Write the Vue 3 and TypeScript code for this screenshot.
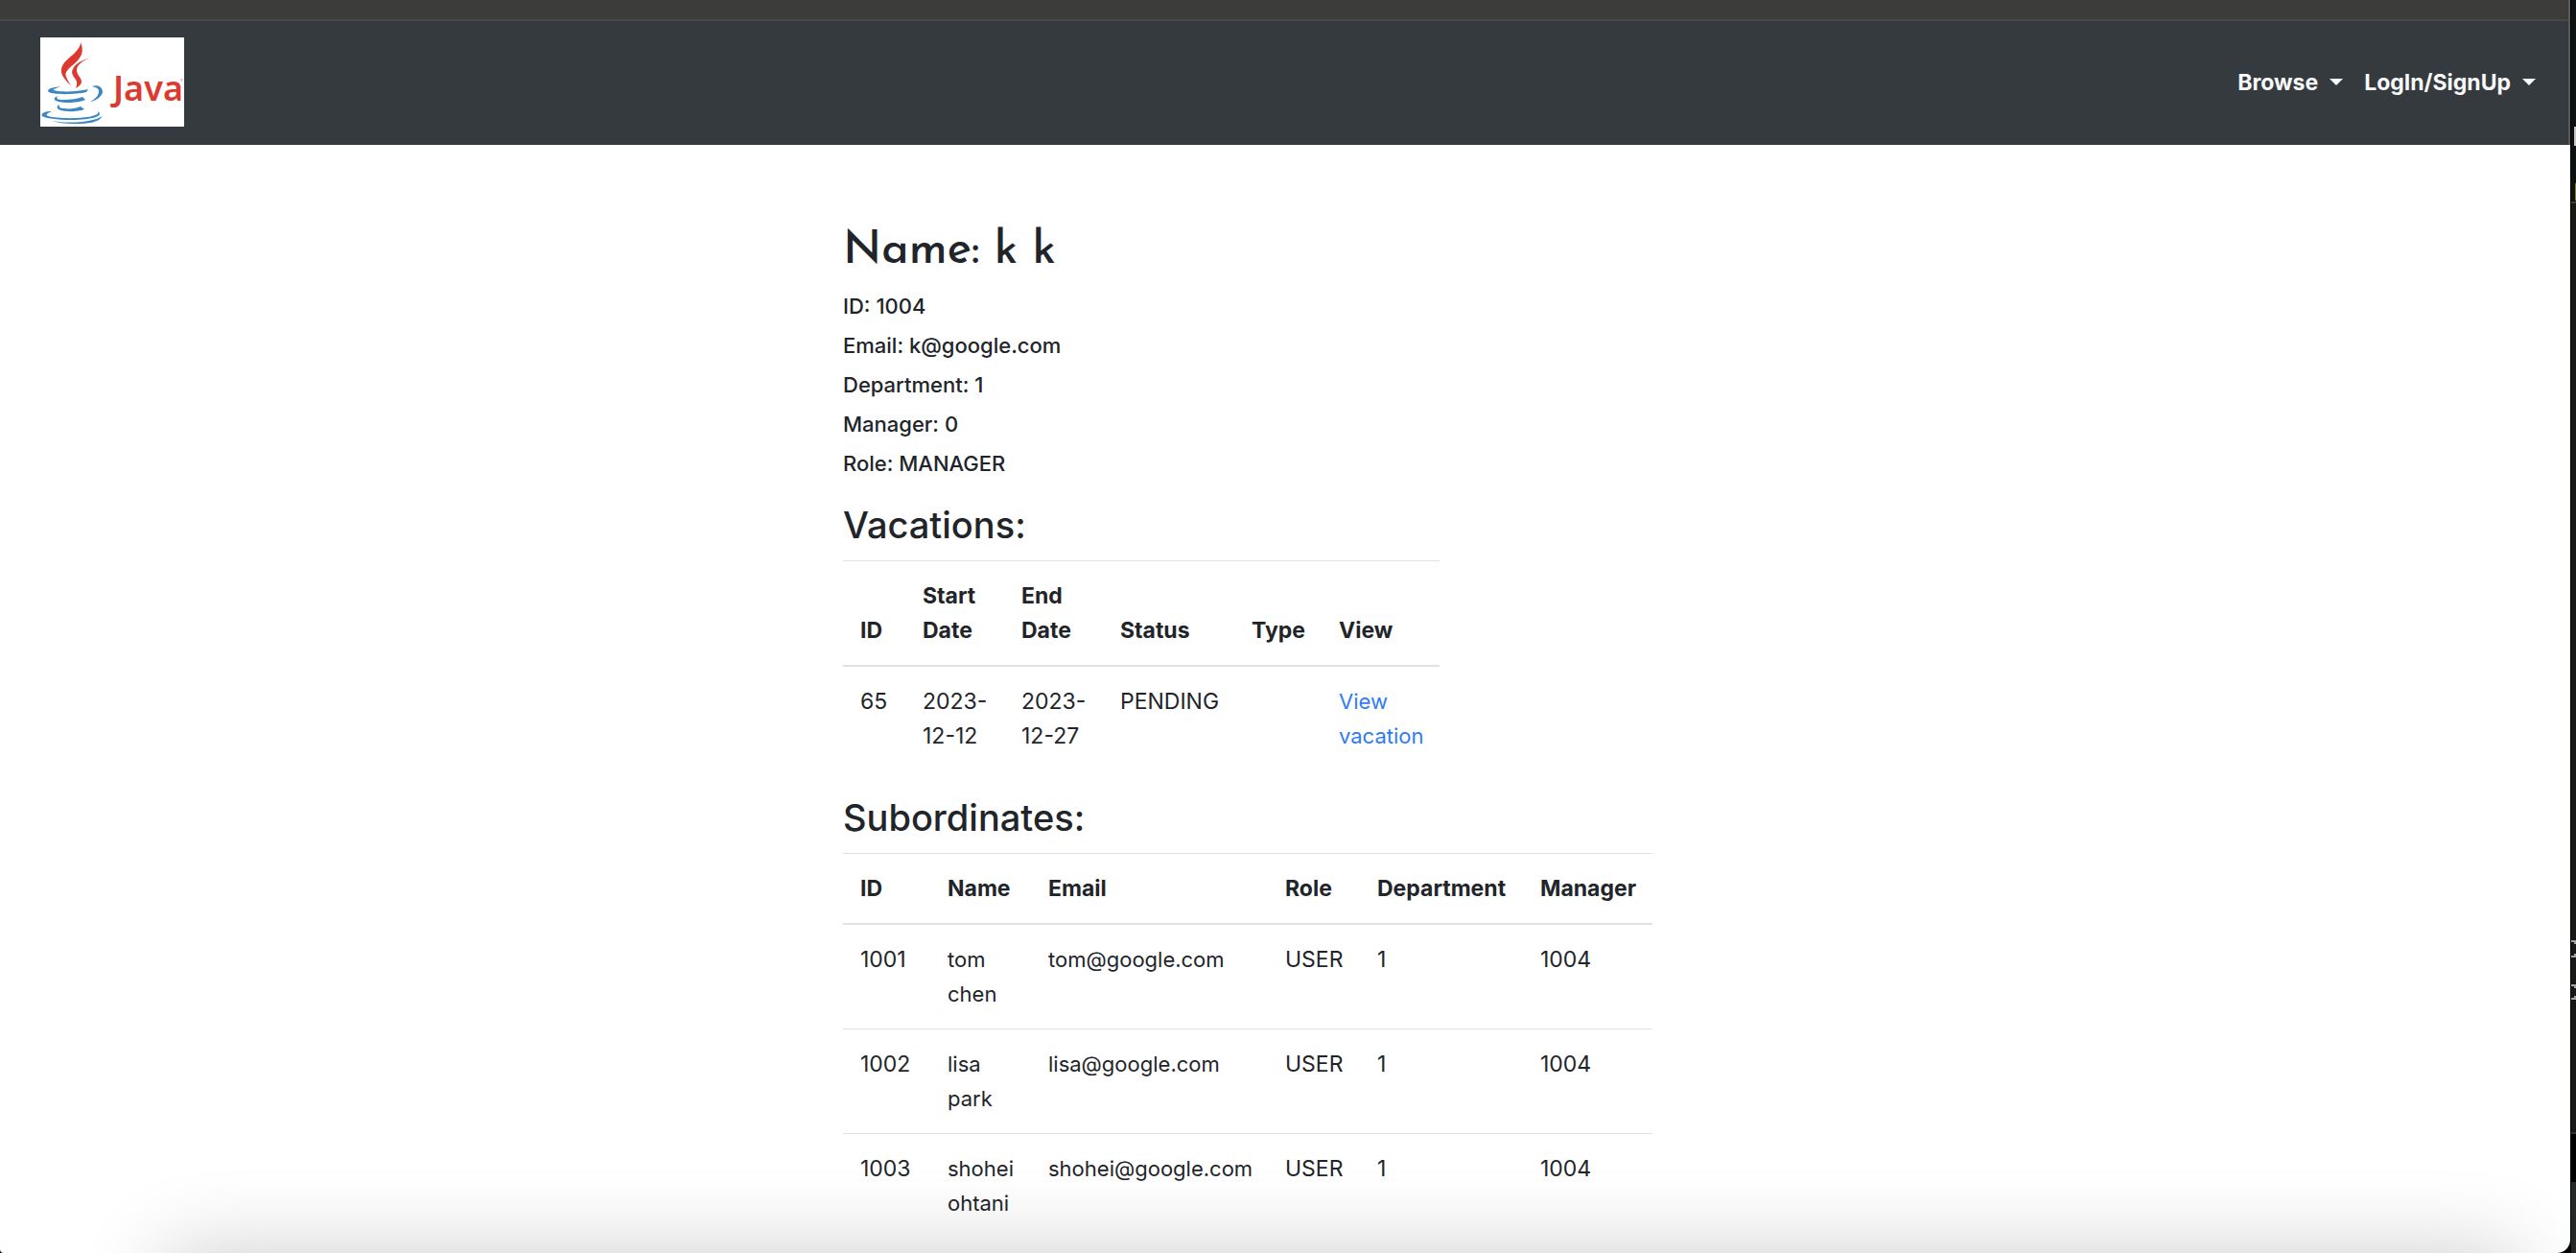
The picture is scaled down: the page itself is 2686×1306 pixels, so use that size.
<script setup lang="ts">
interface Vacation {
  id: number
  start: string
  end: string
  status: string
  type: string
}

interface Employee {
  id: number
  name: string
  email: string
  role: string
  department: number
  manager: number
}

const menus: string[] = ['Browse', 'LogIn/SignUp']

const details: { label: string; value: string }[] = [
  { label: 'ID', value: '1004' },
  { label: 'Email', value: 'k@google.com' },
  { label: 'Department', value: '1' },
  { label: 'Manager', value: '0' },
  { label: 'Role', value: 'MANAGER' },
]

const vacations: Vacation[] = [
  { id: 65, start: '2023-12-12', end: '2023-12-27', status: 'PENDING', type: '' },
]

const subordinates: Employee[] = [
  { id: 1001, name: 'tom chen', email: 'tom@google.com', role: 'USER', department: 1, manager: 1004 },
  { id: 1002, name: 'lisa park', email: 'lisa@google.com', role: 'USER', department: 1, manager: 1004 },
  { id: 1003, name: 'shohei ohtani', email: 'shohei@google.com', role: 'USER', department: 1, manager: 1004 },
]
</script>

<template>
  <div class="desktop">
    <div class="window">
      <div class="toolbar"></div>
      <header class="navbar">
        <a class="brand" href="#" aria-label="Java home">
          <svg viewBox="0 0 150 93" width="150" height="93">
            <rect width="150" height="93" fill="#fff" />
            <g fill="#dc3a30">
              <path d="M42 5C46 14 43 21 36 27C29 33 25 36 27 41C28 44 30 47 32 50C25 44 21 38 22 33C23 26 31 21 36 16C41 11 42 8 42 5Z" />
              <path d="M52 21C43 25 38 29 38 34C38 39 43 42 43 46C43 49 40 51 37 53C38 50 39 47 37 44C35 41 33 39 33 36C34 28 43 24 52 21Z" />
            </g>
            <g fill="#3b86c3">
              <path d="M22 51C16 53 13 54 14 55C18 57 38 57 50 54L48 57C36 60 10 60 8 56C8 53 14 52 22 51Z" />
              <path d="M54 51C60 49 65 52 65 57C64 62 58 66 52 67C58 64 61 60 61 56C61 53 58 52 54 51Z" />
              <path d="M18 61C16 64 18 65 24 65C32 65 39 64 44 62L47 65C39 69 18 69 15 65C14 63 16 62 18 61Z" />
              <path d="M20 70C19 73 21 74 25 74C31 75 37 74 42 72L46 75C38 78 21 78 18 74C17 72 18 71 20 70Z" />
              <path d="M12 77C7 79 5 81 8 82C18 85 48 85 57 81C60 80 61 79 60 77C64 80 61 82 58 83C45 88 6 86 2 82C0 79 5 77 12 77Z" />
              <path d="M13 87C27 90 54 89 65 82C61 89 49 90 36 90C26 90 17 89 13 87Z" />
            </g>
            <text x="76" y="66" class="wordmark">Java</text>
            <path d="M146 44h3M147 44v2" stroke="#dc3a30" stroke-width="1" opacity="0.4" />
          </svg>
        </a>
        <nav class="menus">
          <button v-for="menu in menus" :key="menu" type="button" class="menu">
            {{ menu }}
            <span class="caret"></span>
          </button>
        </nav>
      </header>

      <main class="profile">
        <h1 class="name">Name: k k</h1>
        <p v-for="detail in details" :key="detail.label" class="detail">
          {{ detail.label }}: {{ detail.value }}
        </p>

        <h2 class="section">Vacations:</h2>
        <table class="table vacations">
          <colgroup>
            <col class="w-id" /><col class="w-date" /><col class="w-date" />
            <col class="w-status" /><col class="w-type" /><col class="w-view" />
          </colgroup>
          <thead>
            <tr>
              <th>ID</th>
              <th>Start Date</th>
              <th>End Date</th>
              <th>Status</th>
              <th>Type</th>
              <th>View</th>
            </tr>
          </thead>
          <tbody>
            <tr v-for="vacation in vacations" :key="vacation.id">
              <td>{{ vacation.id }}</td>
              <td>{{ vacation.start }}</td>
              <td>{{ vacation.end }}</td>
              <td>{{ vacation.status }}</td>
              <td>{{ vacation.type }}</td>
              <td class="prose"><a class="link" href="#">View vacation</a></td>
            </tr>
          </tbody>
        </table>

        <h2 class="section">Subordinates:</h2>
        <table class="table subordinates">
          <colgroup>
            <col class="w-number" /><col class="w-name" /><col class="w-email" />
            <col class="w-role" /><col class="w-department" /><col class="w-manager" />
          </colgroup>
          <thead>
            <tr>
              <th>ID</th>
              <th>Name</th>
              <th>Email</th>
              <th>Role</th>
              <th>Department</th>
              <th>Manager</th>
            </tr>
          </thead>
          <tbody>
            <tr v-for="person in subordinates" :key="person.id">
              <td>{{ person.id }}</td>
              <td class="prose">{{ person.name }}</td>
              <td class="prose">{{ person.email }}</td>
              <td>{{ person.role }}</td>
              <td>{{ person.department }}</td>
              <td>{{ person.manager }}</td>
            </tr>
          </tbody>
        </table>
      </main>
    </div>

    <aside class="backdrop" aria-hidden="true">
      <div class="pane pane-top"></div>
      <div class="pane pane-editor"></div>
      <div class="pane pane-gap"></div>
      <div class="pane pane-foot"></div>
      <svg class="fragments" viewBox="0 0 5 1306" width="5" height="1306">
        <path d="M3 132h2v20h-2z" fill="#c4c4c4" />
        <path d="M4 191h1v18h-1z" fill="#7d8420" />
        <path d="M0 981h4v3M0 997h4v-3M0 1027h4v3M0 1041h4v-3" fill="none" stroke="#a5a5a5" stroke-width="2" />
      </svg>
    </aside>
    <div class="dock-shadow"></div>
  </div>
</template>

<style>
body {
  margin: 0;
  background: #000;
}
</style>

<style scoped>
.desktop {
  position: relative;
  display: flex;
  min-height: 100vh;
  overflow: hidden;
  background: #000;
  color: #212529;
  font-family: Inter, "Liberation Sans", sans-serif;
  font-size: 23px;
  line-height: 36px;
}

.window {
  flex: 1;
  margin-right: 1px;
  overflow: hidden;
  background: #fff;
  border-radius: 0 0 14px 4px;
}

.toolbar {
  box-sizing: border-box;
  height: 22px;
  background: #3c3c3b;
  border-right: 2px solid #5c5c5c;
  border-bottom: 2px solid #484848;
}

.navbar {
  box-sizing: border-box;
  display: flex;
  align-items: center;
  justify-content: space-between;
  padding: 17px 34px 19px 42px;
  background: #353a3e;
  border-right: 2px solid #565a5d;
}

.brand,
.brand svg {
  display: block;
}

.wordmark {
  fill: #dc3a30;
  font-family: "Noto Sans", "Open Sans", sans-serif;
  font-size: 36px;
  font-weight: 600;
}

.menus {
  display: flex;
  gap: 22px;
}

.menu {
  display: flex;
  align-items: center;
  gap: 12px;
  padding: 0;
  border: 0;
  background: none;
  color: #f8f9fa;
  font: inherit;
  font-weight: 700;
}

.caret {
  border: 7px solid transparent;
  border-top-color: #f8f9fa;
  border-bottom: 0;
}

.profile {
  width: 922px;
  margin: 0 auto;
  padding-top: 82px;
}

.name {
  margin: 0 0 14px;
  font-family: "Josefin Sans", Lato, sans-serif;
  font-size: 48px;
  font-weight: 500;
  line-height: 58px;
}

.detail {
  margin: 0 0 12px;
  font-size: 22px;
  font-weight: 500;
  line-height: 29px;
}

.section {
  margin: 24px 0 12px;
  font-size: 38px;
  font-weight: 500;
  line-height: 50px;
}

.table {
  table-layout: fixed;
  border-collapse: collapse;
}

.vacations {
  width: 622px;
}

.subordinates {
  width: 844px;
}

.w-id { width: 65px; }
.w-date { width: 103px; }
.w-status { width: 137px; }
.w-type { width: 91px; }
.w-view { width: 123px; }
.w-number { width: 91px; }
.w-name { width: 105px; }
.w-email { width: 247px; }
.w-role { width: 96px; }
.w-department { width: 170px; }
.w-manager { width: 135px; }

th,
td {
  padding: 18px 0 18px 18px;
  border-top: 1px solid #dee2e6;
  text-align: left;
  vertical-align: top;
}

th {
  border-bottom: 2px solid #dee2e6;
  font-weight: 700;
  vertical-align: bottom;
}

.prose {
  font-size: 22px;
}

.link {
  color: #2f7bf6;
  text-decoration: none;
}

.backdrop {
  position: relative;
  display: flex;
  flex-direction: column;
  width: 5px;
}

.pane-top {
  height: 210px;
  background: #0e1112;
}

.pane-editor {
  flex: 1;
  background: #181916;
  border-top: 2px solid #3e4143;
  border-bottom: 2px solid #333;
}

.pane-gap {
  height: 50px;
  background: #000;
}

.pane-foot {
  height: 74px;
  background: #262728;
}

.fragments {
  position: absolute;
  top: 0;
  left: 0;
}

.dock-shadow {
  position: absolute;
  top: 100%;
  right: 60px;
  left: 170px;
  height: 200px;
  box-shadow: 0 0 90px rgba(0, 0, 0, 0.2);
  pointer-events: none;
}
</style>
